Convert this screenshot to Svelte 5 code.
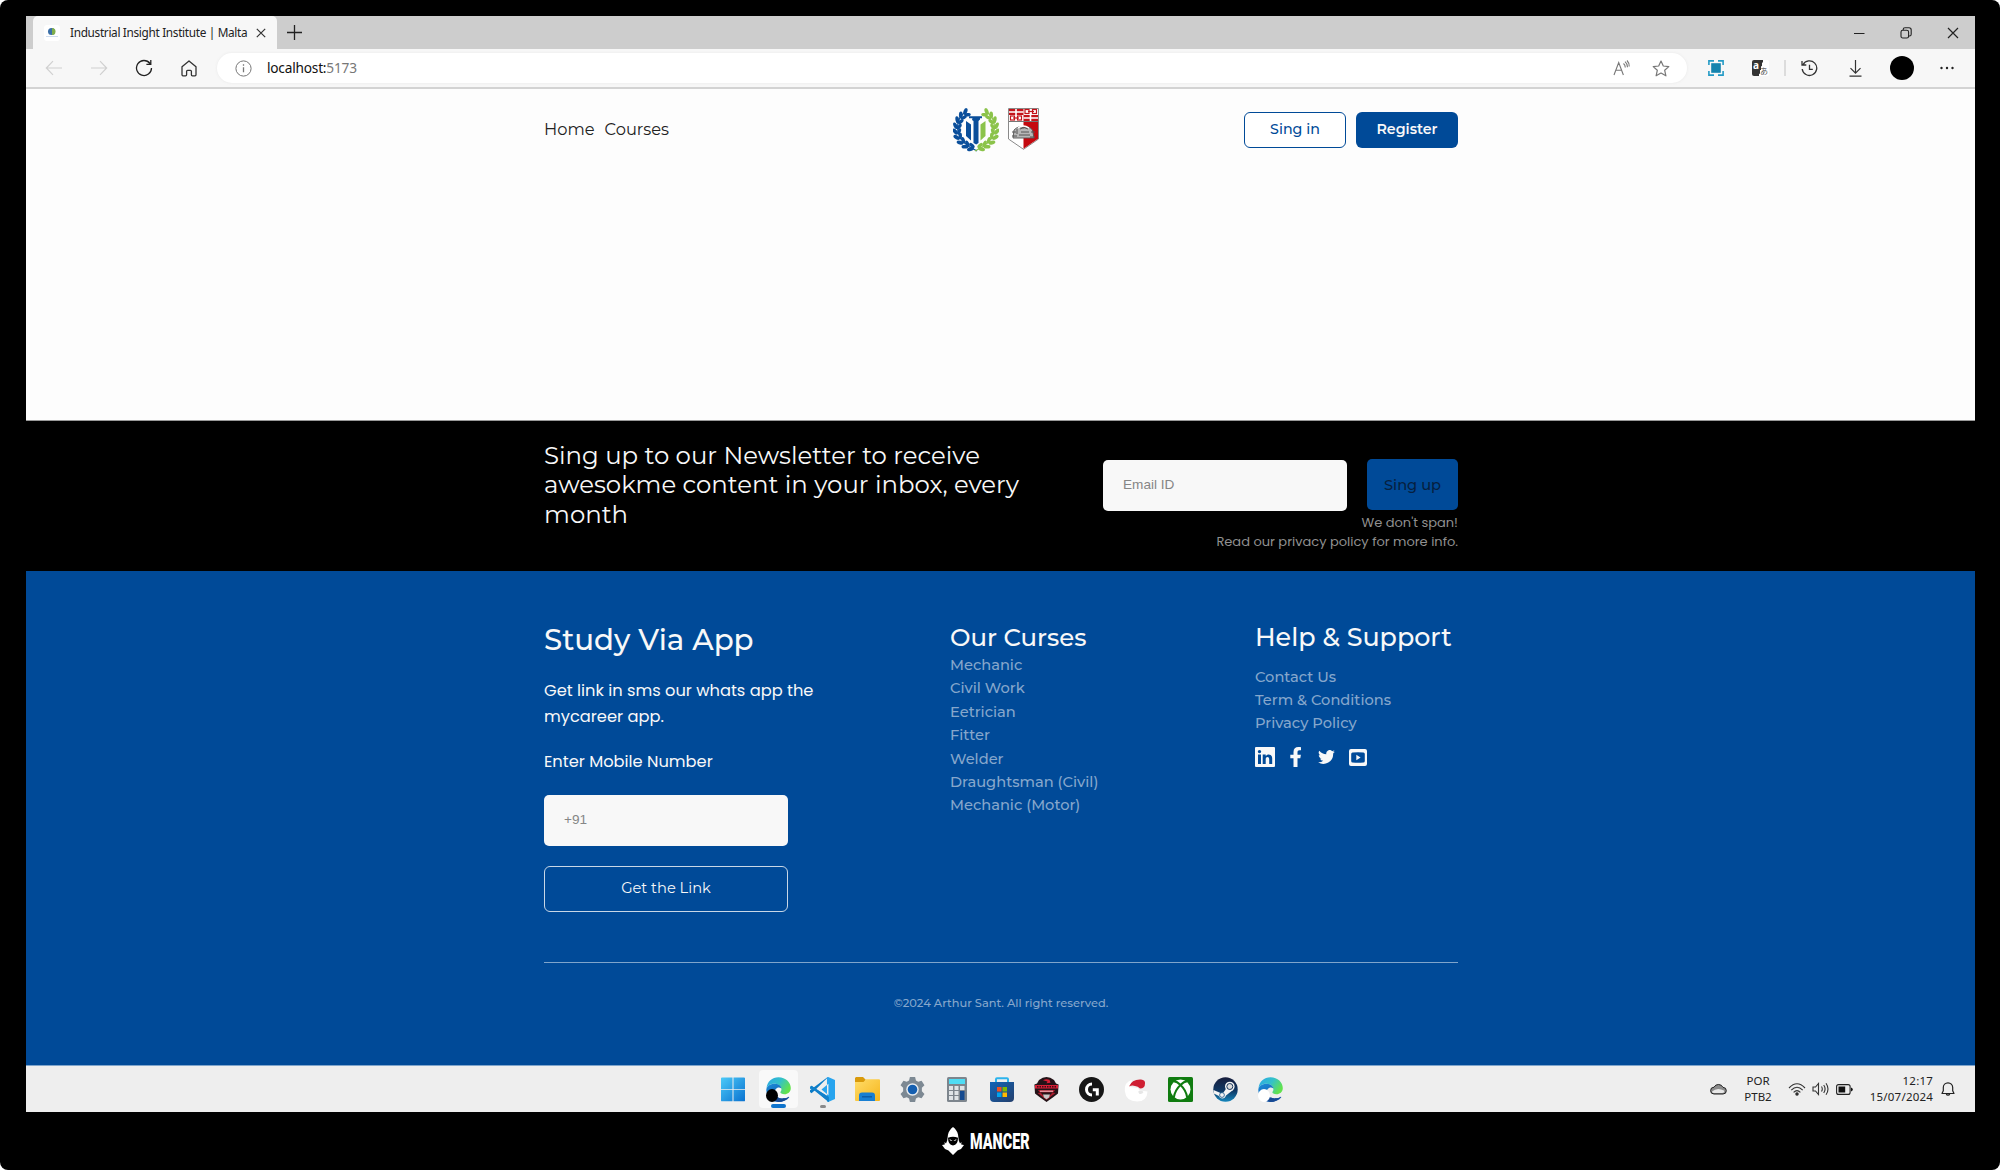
<script>
  const courses = ['Mechanic', 'Civil Work', 'Eetrician', 'Fitter', 'Welder', 'Draughtsman (Civil)', 'Mechanic (Motor)'];
  const support = ['Contact Us', 'Term & Conditions', 'Privacy Policy'];
  // x, y and tilt of each leaf pair along the left half of the laurel
  const leaves = [
    [15, 4, 50], [10.500, 7, 32], [7, 11.500, 20], [5, 17, 5], [4.500, 22.500, -10], [5.500, 28, -28], [8.500, 33, -45], [13, 37, -60], [18, 39.500, -75]
  ];
</script>

{#snippet edge()}
  <svg width="25" height="25" viewBox="0 0 24 24">
    <defs>
      <linearGradient id="eg" x1="0" y1="0" x2="1" y2=".5"><stop offset="0" stop-color="#2aa7e8" /><stop offset=".55" stop-color="#34c1c9" /><stop offset="1" stop-color="#62e24e" /></linearGradient>
      <linearGradient id="eb" x1="0" y1="0" x2=".6" y2="1"><stop offset="0" stop-color="#1a8ddb" /><stop offset="1" stop-color="#1553a4" /></linearGradient>
    </defs>
    <path d="M.5 11C1 4 6 .2 12 .2c7 0 11.8 5 11.8 10.3 0 4-3 6-6 6-2.600 0-4-.8-4-1.800 0-.7 1-1 1-2.700C14.800 9 12 6.500 8 6.500 4.500 6.500 1.500 8.500.5 11z" fill="url(#eg)" />
    <path d="M.3 12.500C.3 9 4 6.500 8 6.500c4 0 6.500 2 6.800 4.500-1-1-2.500-1.300-3.800-.8-2 .8-3 3-2.600 5.300.6 3.500 4.600 5.300 8.600 5 2-.1 3.500-.8 4.500-1.400.6-.3 1 .1.700.6C20 22.500 16 24 12 24 5 24 .3 18.500.3 12.500z" fill="url(#eb)" />
    <path d="M8.400 15.500c.6 3.500 4.600 5.300 8.600 5 2-.1 3.500-.8 4.500-1.400-2 3-6 4.900-9.500 4.900-4-1-5.500-6-3.600-8.500z" fill="#174a94" />
  </svg>
{/snippet}

<div class="monitor">
  <div class="screen">
    <div class="tabs">
      <div class="tab">
        <span class="favicon"><svg width="12" height="10" viewBox="0 0 12 10"><circle cx="5.500" cy="3.500" r="3.500" fill="#3b6fa8" /><path d="M6 0a3.500 3.500 0 0 1 0 7z" fill="#7fae4a" /><path d="M0 8.500h12" stroke="#cfdcee" /></svg></span>
        <span class="tab-title">Industrial Insight Institute | Malta</span>
        <svg width="10" height="10" viewBox="0 0 10 10" stroke="#333" stroke-width="1.200"><path d="M.8.800l8.400 8.400M9.200.800L.8 9.200" /></svg>
      </div>
      <svg class="plus" width="15" height="15" viewBox="0 0 15 15" stroke="#222" stroke-width="1.300"><path d="M7.500 0v15M0 7.500h15" /></svg>
      <div class="win">
        <svg width="12" height="12" viewBox="0 0 12 12" stroke="#222" stroke-width="1.200"><path d="M1 6.500h10.500" /></svg>
        <svg width="12" height="12" viewBox="0 0 12 12" fill="none" stroke="#222" stroke-width="1.100"><rect x="1" y="3.200" width="7.600" height="7.800" rx="1.800" /><path d="M3.200 3V2.600A1.800 1.800 0 0 1 5 .8h4A2.200 2.200 0 0 1 11.200 3v4.200A1.800 1.800 0 0 1 9.400 9h-.6" /></svg>
        <svg width="12" height="12" viewBox="0 0 12 12" stroke="#222" stroke-width="1.200"><path d="M1 1l10 10M11 1L1 11" /></svg>
      </div>
    </div>

    <div class="toolbar">
      <span class="slot"><svg width="18" height="16" viewBox="0 0 18 16" fill="none" stroke="#d0d0d0" stroke-width="1.200"><path d="M17 8H1.500M8 1.200L1.300 8 8 14.800" /></svg></span>
      <span class="slot"><svg width="18" height="16" viewBox="0 0 18 16" fill="none" stroke="#d0d0d0" stroke-width="1.200"><path d="M1 8h15.500M10 1.200L16.700 8 10 14.800" /></svg></span>
      <span class="slot"><svg width="18" height="18" viewBox="0 0 18 18" fill="none" stroke="#222" stroke-width="1.300"><path d="M16.500 9A7.500 7.500 0 1 1 15 4.500M15.800 1v4.400h-4.400" /></svg></span>
      <span class="slot"><svg width="16" height="17" viewBox="0 0 16 17" fill="none" stroke="#333" stroke-width="1.300" stroke-linejoin="round"><path d="M1 6.800L8 1l7 5.800v8a1 1 0 0 1-1 1h-2.600a1 1 0 0 1-1-1v-3.500a1 1 0 0 0-1-1H6.600a1 1 0 0 0-1 1v3.500a1 1 0 0 1-1 1H2a1 1 0 0 1-1-1z" /></svg></span>
      <div class="address">
        <svg width="17" height="17" viewBox="0 0 17 17" fill="none" stroke="#777"><circle cx="8.500" cy="8.500" r="7.600" /><path d="M8.500 7.300v5M8.500 4.300v1.400" stroke-width="1.300" /></svg>
        <span class="url">localhost:<i>5173</i></span>
        <svg class="read" width="17" height="16" viewBox="0 0 17 16" fill="none" stroke="#777" stroke-width="1.100"><path d="M1 15L5.700 2.500 10.400 15M2.800 10.300h5.800M10.500 3.500q1.800 1.600 1.800 4M12 1.700q2.600 2.200 2.500 5.500M14 .5q2.400 2.500 2.200 6" /></svg>
        <svg width="18" height="17" viewBox="0 0 18 17" fill="none" stroke="#777" stroke-width="1.200" stroke-linejoin="round"><path d="M9 1l2.300 5 5.500.6-4.100 3.700 1.200 5.500L9 13l-4.900 2.800 1.200-5.500L1.200 6.600 6.700 6z" /></svg>
      </div>
      <div class="tools">
        <span class="slot"><svg width="16" height="16" viewBox="0 0 16 16"><rect x="3.200" y="3.200" width="9.600" height="9.600" fill="#1583ae" /><path d="M.9 5V.9H6M10 .9h5.100V5M15.100 11v4.100H10M6 15.100H.9V11" fill="none" stroke="#249bc6" stroke-width="1.600" /></svg></span>
        <span class="slot"><span class="translate"><b>a</b><i>あ</i></span></span>
        <span class="sep"></span>
        <span class="slot w"><svg width="17" height="17" viewBox="0 0 17 17" fill="none" stroke="#333" stroke-width="1.300"><path d="M2 4.700A7.300 7.300 0 1 1 1.200 9M1 1v4h4.300M8.500 4.800v4.500h3.300" /></svg></span>
        <span class="slot w"><svg width="13" height="17" viewBox="0 0 13 17" fill="none" stroke="#333" stroke-width="1.200"><path d="M6.500 0v13M1.500 8.200l5 5 5-5M.5 16.200h12" /></svg></span>
        <span class="slot w"><b class="avatar"></b></span>
        <span class="slot w"><svg width="14" height="4" viewBox="0 0 14 4" fill="#222"><circle cx="1.500" cy="2" r="1.200" /><circle cx="7" cy="2" r="1.200" /><circle cx="12.500" cy="2" r="1.200" /></svg></span>
      </div>
    </div>

    <header>
      <div class="wrap bar">
        <nav><a href="#home">Home</a><a href="#courses">Courses</a></nav>
        <div class="logos">
          <svg width="46" height="44" viewBox="0 0 46 44">
            {#each [1, -1] as side}
              <g transform={side === 1 ? '' : 'translate(46 0) scale(-1 1)'} fill={side === 1 ? '#0b4f9b' : '#8bc34a'}>
                <path d="M13 3.500C2 11 .5 28 16 38.500l8 4.500" fill="none" stroke={side === 1 ? '#0b4f9b' : '#8bc34a'} stroke-width="1.200" />
                {#each leaves as [x, y, a]}
                  <g transform="translate({x - 1} {y}) rotate({a})">
                    <ellipse cx="-1.700" cy="0" rx="1.900" ry="3.500" transform="rotate(-30)" />
                    <ellipse cx="2.800" cy="0" rx="1.700" ry="3.300" transform="rotate(30)" />
                  </g>
                {/each}
              </g>
            {/each}
            <path d="M13 13l5 3.500v16L13 28z" fill="#0b4f9b" />
            <path d="M19.500 10h7.500v1.500l-1.500 1.500v22l-2.300 1.500-2.700-1.500V13l-1.500-1z M16 8.300h13v2H16z" fill="#0b4f9b" />
            <path d="M27.500 16.500l5-3.500v15l-5 4.500z" fill="#8bc34a" />
          </svg>
          <svg width="31" height="42" viewBox="0 0 31 42">
            <path d="M.5.500h30V31L15.500 41.300.5 31z" fill="#fff" stroke="#8a8a8a" />
            <path d="M15.500 14H30v16.800L15.500 40.700z" fill="#c4090f" />
            <path d="M1 1h14.500v6H1zM15.500 7H30v6H15.500z" fill="#c4141a" />
            <path d="M1 4h14.500M8 1v6M15.500 10H30M22.500 7v6" stroke="#fff" stroke-width="1.600" />
            <g fill="none" stroke="#c4141a" stroke-width="1.200"><rect x="17" y="1.500" width="4" height="4" /><rect x="24.500" y="1.500" width="4" height="4" /><path d="M20 3.500h6" /><rect x="2.500" y="8" width="4" height="4" /><rect x="9.500" y="8" width="4" height="4" /><path d="M5 10h6" /></g>
            <path d="M1 13.500h29" stroke="#777" />
            <path d="M6 22q5-5 9.500-2 5-3 9 2l1.500 8H5z" fill="#b7b7b7" stroke="#555" stroke-width=".9" />
            <path d="M9 21v5M12 21q4-3 8 0M13 24h8M11 27h11M4 24h4M4 28h5M23 24h4M22 29h5" fill="none" stroke="#555" stroke-width="1" />
            <path d="M10 20q5-4 11 0" fill="none" stroke="#fff" stroke-width="1.500" />
          </svg>
        </div>
        <div class="auth"><button class="signin">Sing in</button><button class="register">Register</button></div>
      </div>
    </header>

    <section class="news">
      <div class="wrap news-row">
        <h2>Sing up to our Newsletter to receive<br />awesokme content in your inbox, every<br />month</h2>
        <div class="form">
          <div class="fields"><input type="text" placeholder="Email ID" /><button>Sing up</button></div>
          <p>We don't span!<br />Read our privacy policy for more info.</p>
        </div>
      </div>
    </section>

    <footer>
      <div class="wrap cols">
        <div class="study">
          <h3>Study Via App</h3>
          <p class="lead">Get link in sms our whats app the<br />mycareer app.</p>
          <p class="enter">Enter Mobile Number</p>
          <input type="text" placeholder="+91" />
          <button>Get the Link</button>
        </div>
        <div class="list">
          <h4>Our Curses</h4>
          {#each courses as c}<a href="#course">{c}</a>{/each}
        </div>
        <div class="list help">
          <h4>Help &amp; Support</h4>
          {#each support as s}<a href="#support">{s}</a>{/each}
          <div class="social">
            <svg width="20" height="20" viewBox="0 0 20 20"><path fill-rule="evenodd" fill="#f8f8f8" d="M1 0h18a1 1 0 0 1 1 1v18a1 1 0 0 1-1 1H1a1 1 0 0 1-1-1V1a1 1 0 0 1 1-1zM3 7.600V17h3V7.600zM4.500 2.900a1.700 1.700 0 1 0 0 3.400 1.700 1.700 0 0 0 0-3.400zM7.700 7.600V17h3v-4.700c0-3 3.500-3 3.500 0V17h3v-5.600c0-4.600-4.800-5-6.500-2.400V7.600z" /></svg>
            <svg class="fb" width="12" height="20" viewBox="0 0 12 20"><path fill="#f8f8f8" d="M3.500 20v-8.800H.3V7.700h3.200V5c0-3.200 2-4.900 4.800-4.900 1.400 0 2.700.2 2.700.2v3H9.500c-1.500 0-2 .9-2 1.900v2.500h3.400l-.6 3.500H7.500V20z" /></svg>
            <svg class="tw" width="17" height="14" viewBox="0 0 24 20"><path fill="#f8f8f8" d="M24 2.400a10 10 0 0 1-2.800.8A5 5 0 0 0 23.300.5a10 10 0 0 1-3.100 1.200 4.900 4.900 0 0 0-8.400 4.500A14 14 0 0 1 1.700 1 4.900 4.900 0 0 0 3.200 7.600 5 5 0 0 1 1 7v.1a4.900 4.900 0 0 0 4 4.800 5 5 0 0 1-2.300.1 4.900 4.900 0 0 0 4.600 3.400A10 10 0 0 1 0 17.500 14 14 0 0 0 21.500 5z" /></svg>
            <svg width="18" height="17" viewBox="0 0 18 17"><path fill-rule="evenodd" fill="#f8f8f8" d="M2 0h14a2 2 0 0 1 2 2v13a2 2 0 0 1-2 2H2a2 2 0 0 1-2-2V2a2 2 0 0 1 2-2zM3.500 3.500Q2.300 3.500 2.200 5v7q.1 1.500 1.300 1.500 5.500.5 11 0 1.200 0 1.300-1.500V5q-.1-1.500-1.300-1.500-5.500-.5-11 0z" /><path d="M7.300 5.800l4.300 2.700-4.300 2.700z" fill="#f8f8f8" /></svg>
          </div>
        </div>
      </div>
      <div class="wrap legal">©2024 Arthur Sant. All right reserved.</div>
    </footer>

    <div class="taskbar">
      <div class="apps">
        <span><svg width="24" height="27" viewBox="0 0 24 27"><defs><linearGradient id="w" x1="0" y1="0" x2="1" y2="1"><stop offset="0" stop-color="#4ccaf8" /><stop offset="1" stop-color="#0a72d0" /></linearGradient></defs><path fill="url(#w)" d="M1 0h10.500v12.500H0V1a1 1 0 0 1 1-1zM12.500 0H23a1 1 0 0 1 1 1v11.500H12.500zM0 13.500h11.500V26H1a1 1 0 0 1-1-1zM12.500 13.500H24V25a1 1 0 0 1-1 1H12.500z" transform="scale(1 .92) translate(0 1.500)" /></svg></span>
        <span class="active">{@render edge()}<i class="dot"></i></span>
        <span class="open"><svg width="25" height="25" viewBox="0 0 24 24"><path d="M17.500 0L5 12.500 1.500 15.500 0 14.500v-1.800L17 0z" fill="#0a7bc6" /><path fill-rule="evenodd" d="M17.500 0L24 2.800v18.400L17.500 24l-1.200-.6V.6zM17.700 6.500L11 12l6.700 5.500z" fill="#27a4ee" /><path d="M0 9.500L1.500 8.500 5 11.300 18 19v5L5 12.900 0 11.300z" fill="#1689d4" /><path d="M0 9.500l1.500-1L18 19.500V24z" fill="#1280ca" /></svg></span>
        <span><svg width="25" height="25" viewBox="0 0 25 25"><defs><linearGradient id="fo" x1="0" y1="0" x2="1" y2="1"><stop offset="0" stop-color="#ffdc69" /><stop offset="1" stop-color="#f6b61c" /></linearGradient></defs><path d="M1 0h7l2.500 2.500v4H0V1z" fill="#d99a0b" /><path d="M0 5h8.500L11 2.300h13a1 1 0 0 1 1 1V23a1 1 0 0 1-1 1H1a1 1 0 0 1-1-1z" fill="url(#fo)" /><path d="M4 24v-5.500a3 3 0 0 1 3-3h10a3 3 0 0 1 3 3V24z" fill="#197fd2" /><path d="M7 19h10v1.500H7z" fill="#0d5da8" /></svg></span>
        <span><svg width="25" height="25" viewBox="0 0 24 24"><path d="M9.500 0h5l.8 3.300 2.200 1.200 3.200-1 2.800 4.300L21 10.300v3.400l2.500 2.500-2.800 4.300-3.200-1-2.200 1.200-.8 3.300h-5l-.8-3.300-2.200-1.200-3.200 1L.5 16.200 3 13.700v-3.400L.5 7.800l2.800-4.300 3.200 1 2.200-1.200z" fill="#7d8993" /><circle cx="12" cy="12" r="6" fill="#e9edf1" /><circle cx="12" cy="12" r="4.600" fill="#155fb0" /></svg></span>
        <span><svg width="20" height="25" viewBox="0 0 20 25"><rect width="20" height="25" rx="1.500" fill="#7d858d" /><rect x="2" y="2" width="16" height="5" fill="#4fdcf4" /><g fill="#dfe3e6"><path d="M2 9h4v4H2zM7.500 9h4v4h-4zM13 9h4.500v4H13zM2 14h4v4H2zM7.500 14h4v4h-4zM2 19h4v4H2zM7.500 19h4v4h-4z" /></g><path d="M13 14h4.500v9H13z" fill="#164b90" /></svg></span>
        <span><svg width="24" height="25" viewBox="0 0 24 25"><defs><linearGradient id="st" x1="0" y1="0" x2="1" y2="1"><stop offset="0" stop-color="#1265b8" /><stop offset="1" stop-color="#243f6c" /></linearGradient></defs><path d="M6 6V2.300A1 1 0 0 1 7 1.300h10a1 1 0 0 1 1 1V6" fill="none" stroke="#2cb4ed" stroke-width="2" /><path d="M0 5h24v16a4 4 0 0 1-4 4H4a4 4 0 0 1-4-4z" fill="url(#st)" /><path d="M7 10h4.500v4.500H7z" fill="#f25022" /><path d="M12.500 10H17v4.500h-4.500z" fill="#7fba00" /><path d="M7 15.500h4.500V20H7z" fill="#00a4ef" /><path d="M12.500 15.500H17V20h-4.500z" fill="#ffb900" /></svg></span>
        <span><svg width="25" height="25" viewBox="0 0 25 25"><path d="M5 3q7.500-6 15 0l2 3.500 2.600 1-.6 9-4.500 3.500-7 4.900-7-4.900L1 16.500.4 7.500 3 6.500z" fill="#241318" /><path d="M3.500 16l9 7L21.500 16l-3-.5-6 6-6-6z" fill="#a71b2b" /><path d="M9 17.500h7l-1 3-2.500 1.800-2.500-1.800z" fill="#c9c6c6" /><path d="M1 8h23v3.500H1zM9 3.300q3-2 6.500-.5l1 3-4 .5 1-1.800zM4 13.200h17l-2 2H6z" fill="#d81f36" /><path d="M3 9.800h19" stroke="#3b0d14" stroke-width="1.500" stroke-dasharray="1.500 1" /><path d="M6 14.200h13" stroke="#eee" stroke-width=".8" /></svg></span>
        <span><svg width="25" height="25" viewBox="0 0 25 25"><circle cx="12.500" cy="12.500" r="12.500" fill="#161616" /><path d="M13 5.500a7 7 0 1 0 0 14v-3a4 4 0 0 1 0-8zM13.800 11.200h6v7.300h-3v-4.300h-3z" fill="#fff" /></svg></span>
        <span><svg width="25" height="25" viewBox="0 0 25 25"><path d="M8 3Q0 5 .8 14 2 24.500 13 24.500q10 0 10.500-10l-8-1L14 11l-8-1z" fill="#fff" /><path d="M14.500 14q3.500-1 5 1-1 2.500-4 2-1.500-1.300-1-3z" fill="#e6e6e6" /><path d="M5 9.500Q8 2 17 2.500q4.500.5 4 4 0 5-5 5-2-2.500-5-2.500-3-1-6 .5z" fill="#cf1f33" /></svg></span>
        <span><svg width="25" height="25" viewBox="0 0 25 25"><rect width="25" height="25" rx="1.500" fill="#107c10" /><circle cx="12.500" cy="12.500" r="10" fill="#fff" /><path d="M5 4Q9.500 4.500 12.500 8 15.500 4.500 20 4M12.500 8Q7 13 5.800 20.500M12.500 8q5.500 5 6.700 12.500" fill="none" stroke="#107c10" stroke-width="2" /></svg></span>
        <span><svg width="25" height="25" viewBox="0 0 25 25"><defs><linearGradient id="sm" x1="0" y1="0" x2="0" y2="1"><stop offset="0" stop-color="#171d3c" /><stop offset=".55" stop-color="#0f3864" /><stop offset="1" stop-color="#1687bd" /></linearGradient></defs><circle cx="12.500" cy="12.500" r="12.200" fill="url(#sm)" /><path d="M.5 13l7 3 3-.5 3-4.500 6.500 2-7 5.500q-1 3.200-4 3-2.500-.2-3-2.500L.8 16.500z" fill="#f4f4f4" /><circle cx="16.800" cy="9.500" r="4.800" fill="#f4f4f4" /><circle cx="16.800" cy="9.500" r="3" fill="#ddd" stroke="#16355d" stroke-width="1" /><circle cx="9" cy="18" r="2.400" fill="none" stroke="#155388" stroke-width=".8" /></svg></span>
        <span class="prof">{@render edge()}<i class="dot"></i></span>
      </div>
      <div class="tray">
        <svg width="17" height="12" viewBox="0 0 17 12"><path d="M4 11a3.400 3.400 0 0 1 0-6.800A5 5 0 0 1 13 4.400a3.300 3.300 0 0 1 0 6.600z" fill="#8b8b8b" stroke="#222" /><path d="M2 8.500Q7 4 14 7.500q1 2-2 2.600H4q-1.700 0-2-1.600z" fill="#e8e8e8" /></svg>
        <div class="lang">POR<br />PTB2</div>
        <svg class="wifi" width="18" height="13" viewBox="0 0 18 13" fill="none" stroke="#333" stroke-width="1.100"><path d="M1 5q8-8.500 16 0M3.300 7.200q5.700-6 11.400 0M5.600 9.400q3.400-3.600 6.800 0" /><circle cx="9" cy="11" r="1.200" fill="#222" /></svg>
        <svg class="vol" width="17" height="14" viewBox="0 0 17 14" fill="none" stroke="#333" stroke-width="1.100"><path d="M1 5h2.500L6.500 1.500v11L3.500 9H1zM9.500 4.500q1.600 2.500 0 5M11.700 3q2.800 4 0 8M14 1.200q4 5.800 0 11.600" /></svg>
        <svg width="17" height="11" viewBox="0 0 17 11"><rect x=".6" y=".6" width="13.500" height="9.800" rx="2" fill="none" stroke="#222" stroke-width="1.100" /><rect x="2.500" y="2.500" width="6.700" height="6" fill="#111" /><path d="M15 3.500q1.800.3 1.800 2T15 7.500z" fill="#111" /></svg>
        <div class="clock">12:17<br />15/07/2024</div>
        <svg width="14" height="15" viewBox="0 0 14 15" fill="none" stroke="#222" stroke-width="1.200" stroke-linejoin="round"><path d="M1 11.500l1.300-2.800V5.500a4.700 4.700 0 0 1 9.400 0v3.200L13 11.500zM5.300 12a1.800 1.800 0 0 0 3.400 0" /></svg>
      </div>
    </div>
  </div>

  <div class="brand">
    <svg width="22" height="28" viewBox="0 0 22 28"><path fill-rule="evenodd" fill="#fff" d="M11 0q4 3 5 7.500l.8 6L18 16.500l1.500-1.500-.3 2.500L22 18l-3 4-3.500 1.500L11 28l-4.500-4.500L3 22l-3-4 2.800-.5-.3-2.500L4 16.500l1.200-3L6 7.500Q7 3 11 0zM6 10.800q0 7.400 5 7.700 5-.3 5-7.700-5-2.300-10 0z" /><path d="M7.300 11.800l3.200 2.200q-2.300.6-3.200-2.200zM14.700 11.800L11.500 14q2.300.6 3.200-2.200z" fill="#fff" /></svg>
    <span class="word">MANCER</span>
  </div>
</div>

<style>
  :global(body) { margin: 0; background: #fff; }
  * { box-sizing: border-box; }
  svg { display: block; flex: none; }
  a { text-decoration: none; color: inherit; }
  h2, h3, h4, p { margin: 0; font-weight: 400; }
  button, input { display: block; margin: 0; padding: 0; border: 0; font: inherit; }

  .monitor { width: 2000px; height: 1170px; padding: 16px 25px 0 26px; background: #000; border-radius: 8px; overflow: hidden; font-family: Montserrat, Inter, sans-serif; }
  .screen { height: 1096px; background: #fdfdfd; display: flex; flex-direction: column; }

  .tabs { height: 33px; background: #cdcdcd; display: flex; align-items: center; font-family: 'Noto Sans', sans-serif; }
  .tab { width: 244px; height: 33px; margin-left: 7px; padding-left: 11px; background: #f7f7f7; border-radius: 5px 5px 0 0; display: flex; align-items: center; }
  .favicon { width: 16px; height: 16px; background: #fff; border-radius: 3px; display: flex; align-items: center; justify-content: center; }
  .tab-title { width: 186px; margin-left: 10px; padding-bottom: 1px; font-size: 11.800px; letter-spacing: -.32px; color: #222; white-space: nowrap; }
  .plus { margin-left: 10px; }
  .win { margin-left: auto; margin-right: 16px; display: flex; gap: 35px; }

  .toolbar { height: 40px; padding-left: 5px; background: #f7f7f7; border-bottom: 2px solid #d3d3d3; display: flex; align-items: center; }
  .slot { width: 45px; display: flex; justify-content: center; flex: none; }
  .slot.w { width: 45.850px; }
  .address { width: 1470px; height: 30px; margin: 0 6px; padding: 0 17px 0 18px; border-radius: 15px; background: #fff; display: flex; align-items: center; box-shadow: 0 0 3px #e8e8e8; }
  .url { margin-left: 15px; padding-bottom: 1px; font: 13.700px 'Noto Sans', sans-serif; letter-spacing: -.22px; color: #111; }
  .url i { font-style: normal; color: #777; }
  .read { margin-left: auto; margin-right: 22px; }
  .tools { display: flex; align-items: center; }
  .sep { width: 2px; height: 16px; margin: 0 1px; background: #dcdcdc; }
  .avatar { width: 24px; height: 24px; border-radius: 50%; background: #000; }
  .translate { display: flex; align-items: flex-start; width: 17px; height: 16px; border-radius: 2px; background: linear-gradient(105deg, #333 52%, #fff 53%); }
  .translate b { width: 8px; padding-left: 1px; font: 700 10px/10px 'Noto Sans', sans-serif; color: #fff; }
  .translate i { font: 8px/9px 'Noto Sans CJK JP', sans-serif; margin-top: 6px; color: #555; }

  .wrap { width: 914px; margin: 0 auto 0 518px; }
  header { height: 332px; padding-top: 18.500px; border-bottom: 1px solid #999; }
  .bar { height: 44px; display: grid; grid-template-columns: 409px 290px 1fr; align-items: center; }
  nav { display: flex; gap: 10px; padding-bottom: 1px; font-size: 16.270px; color: #222; }
  .logos { display: flex; gap: 9px; }
  .auth { display: flex; gap: 10px; justify-content: flex-end; font-size: 14.230px; font-weight: 500; }
  .auth button { width: 102px; height: 36px; padding-bottom: 1px; border-radius: 6px; }
  .signin { background: #fff; border: 1px solid #004a98; color: #004a98; }
  .register { background: #004a98; color: #f8f8f8; font-weight: 600; }

  .news { height: 150px; background: #000; color: #f8f8f8; }
  .news-row { display: flex; justify-content: space-between; }
  h2 { padding-top: 20px; font-size: 24.400px; line-height: 29.300px; white-space: nowrap; }
  .form { padding-top: 38px; text-align: right; }
  .fields { display: flex; gap: 20px; justify-content: flex-end; }
  input { width: 244px; height: 51px; padding: 0 0 2px 20px; border-radius: 5px; background: #f8f8f8; font: 13.600px 'Liberation Sans', sans-serif; }
  .fields input { margin-top: 1px; }
  input::placeholder { color: #868686; opacity: 1; }
  .fields button { width: 91px; height: 51px; border-radius: 5px; background: #004a98; color: #06203f; font-size: 14.640px; font-weight: 500; }
  .form p { margin-top: 3px; font: 13px/18.500px Poppins, Inter, sans-serif; color: #909090; white-space: nowrap; }

  footer { height: 495px; background: #004a98; color: #f8f8f8; border-bottom: 1px solid #7fa5cc; }
  .cols { height: 392px; display: grid; grid-template-columns: 406px 305px 1fr; border-bottom: 1px solid #7fa5cc; white-space: nowrap; }
  .study { padding-top: 50px; }
  h3 { font-size: 29.280px; line-height: 38px; font-weight: 500; }
  .lead, .enter { margin-top: 19px; font: 16.270px/26px Poppins, Inter, sans-serif; }
  .study input { margin-top: 20px; }
  .study button { width: 244px; height: 46px; margin-top: 20px; padding-bottom: 2px; border: 1px solid #c8d7e7; border-radius: 6px; background: transparent; color: #f8f8f8; font-size: 14.640px; }
  .list { padding-top: 51px; }
  h4 { margin-bottom: 2px; font-size: 24.400px; line-height: 30px; font-weight: 500; }
  .list a { display: block; font-size: 14.640px; line-height: 23.400px; font-weight: 500; color: #86a7cc; }
  .list.help h4 { margin-bottom: 13.500px; font-size: 25.400px; }
  .social { margin-top: 11.500px; display: flex; align-items: center; }
  .social svg { margin-right: 14.500px; }
  .social .fb { margin-right: 16.500px; }
  .social .tw { margin-right: 13.500px; }
  .legal { padding-top: 31px; text-align: center; font-size: 11.390px; line-height: 18px; font-weight: 500; color: #86a7cc; }

  .taskbar { height: 46px; background: #eee; display: flex; align-items: center; }
  .apps { display: flex; margin-left: 685px; }
  .apps span { width: 44.750px; height: 38px; display: flex; align-items: center; justify-content: center; position: relative; }
  .active::before { content: ''; position: absolute; inset: 0 3px; background: #f9f9f9; border-radius: 4px; z-index: 0; }
  .active :global(svg) { position: relative; }
  .active::after, .open::after { content: ''; position: absolute; bottom: 0; width: 15px; height: 4px; border-radius: 2px; background: #0f74cd; }
  .open::after { width: 6px; height: 3px; background: #8a8a8a; }
  .dot { position: absolute; left: 10px; top: 19px; width: 12px; height: 13px; border-radius: 50%; background: #000; }
  .prof .dot { background: #fff; }
  .tray { margin-left: auto; margin-right: 20px; display: flex; align-items: center; font: 11.500px/16px 'Noto Sans', sans-serif; color: #222; }
  .lang { width: 35px; margin: 0 12px 0 14px; text-align: center; }
  .wifi { margin-right: 6.500px; }
  .vol { margin-right: 7px; }
  .clock { width: 80px; margin-right: 8px; text-align: right; letter-spacing: .2px; }

  .brand { padding-top: 15px; padding-left: 916px; display: flex; gap: 6px; }
  .word { width: 59px; font: 900 21.500px/30px Roboto, sans-serif; color: #fff; transform: scaleX(.67); transform-origin: 0 0; }
</style>
